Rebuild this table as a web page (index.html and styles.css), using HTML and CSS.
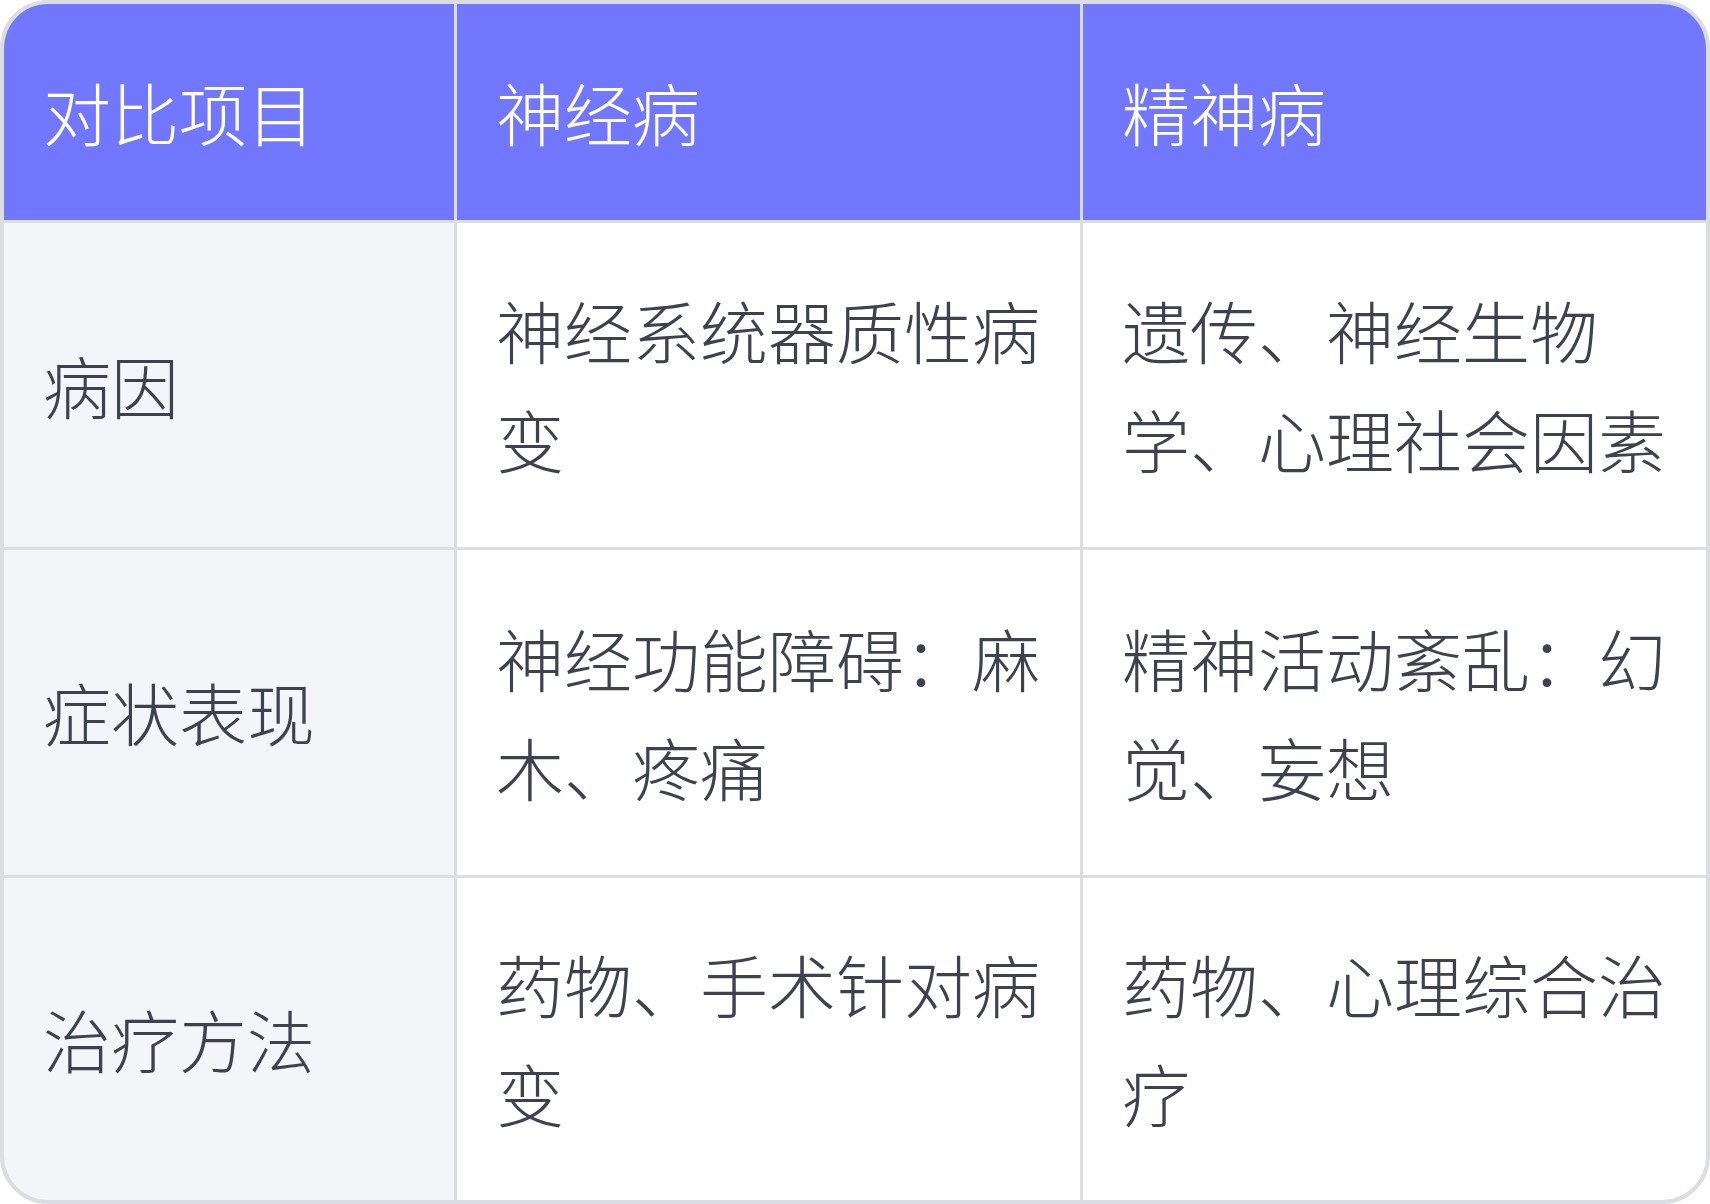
FILE: index.html
```html
<!DOCTYPE html>
<html lang="zh-CN">
<head>
<meta charset="utf-8">
<link rel="stylesheet" href="styles.css">
</head>
<body>
<div class="table">
  <div class="cell head">对比项目</div>
  <div class="cell head">神经病</div>
  <div class="cell head">精神病</div>

  <div class="cell label">病因</div>
  <div class="cell">神经系统器质性病变</div>
  <div class="cell">遗传、神经生物学、心理社会因素</div>

  <div class="cell label">症状表现</div>
  <div class="cell">神经功能障碍：麻木、疼痛</div>
  <div class="cell">精神活动紊乱：幻觉、妄想</div>

  <div class="cell label">治疗方法</div>
  <div class="cell">药物、手术针对病变</div>
  <div class="cell">药物、心理综合治疗</div>
</div>
</body>
</html>
```
FILE: styles.css
```css
html, body {
  margin: 0;
  padding: 0;
  background: #ffffff;
}
body {
  font-family: "Noto Sans CJK SC", "Noto Sans", sans-serif;
}
.table {
  box-sizing: border-box;
  width: 1710px;
  height: 1204px;
  border: 4px solid #dcdde2;
  border-radius: 48px;
  overflow: hidden;
  background: #dcdde2;
  display: grid;
  grid-template-columns: 450px 623px 623px;
  grid-template-rows: 216px 324px 325px 322px;
  gap: 3px;
}
.cell {
  display: flex;
  align-items: center;
  padding: 0 29px 0 39px;
  background: #ffffff;
  color: #3e4250;
  font-size: 68px;
  line-height: 1.6;
  font-weight: 300;
}
.head {
  background: #7177ff;
  color: #ffffff;
}
.label {
  background: #f4f5f9;
}
```
